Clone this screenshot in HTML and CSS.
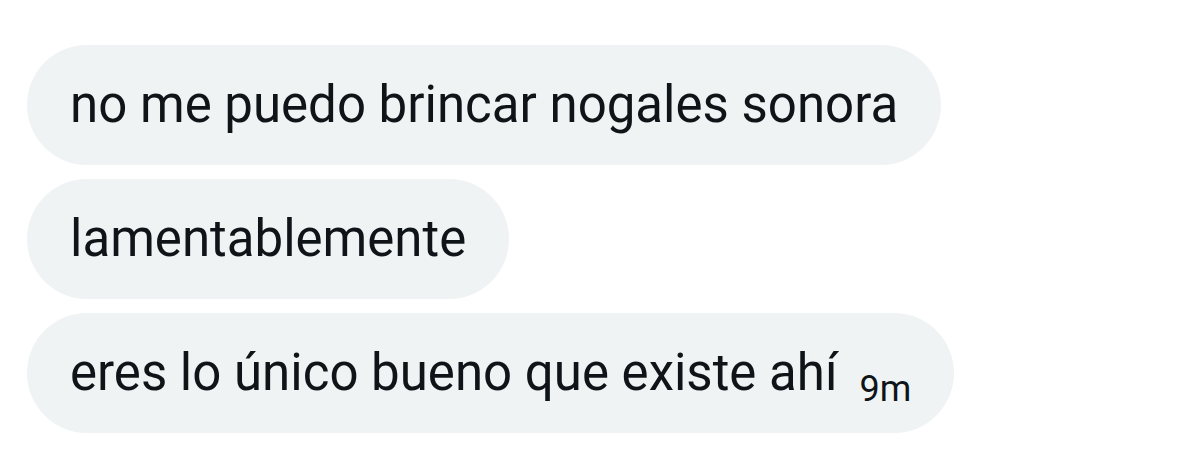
FILE: index.html
```html
<!DOCTYPE html>
<html lang="es">
<head>
<meta charset="utf-8">
<link rel="stylesheet" href="styles.css">
</head>
<body>
<div class="thread">
  <div class="bubble"><span class="text">no me puedo brincar nogales sonora</span></div>
  <div class="bubble"><span class="text">lamentablemente</span></div>
  <div class="bubble"><span class="text">eres lo único bueno que existe ahí</span><span class="time">9m</span></div>
</div>
</body>
</html>
```
FILE: styles.css
```css
html, body {
  margin: 0;
  padding: 0;
  background: #ffffff;
}
body {
  width: 1200px;
  height: 451px;
  overflow: hidden;
  font-family: Roboto, "Noto Sans", sans-serif;
  color: #0f1419;
}
.thread {
  display: flex;
  flex-direction: column;
  align-items: flex-start;
  gap: 14px;
  padding: 45px 0 0 27px;
}
.bubble {
  height: 120px;
  box-sizing: border-box;
  padding: 0 43px;
  background: #eff3f4;
  border-radius: 60px;
  font-size: 51px;
  line-height: 120px;
  white-space: nowrap;
}
.time {
  font-size: 36px;
  line-height: 1;
  margin-left: 22px;
  vertical-align: -11px;
}
```
